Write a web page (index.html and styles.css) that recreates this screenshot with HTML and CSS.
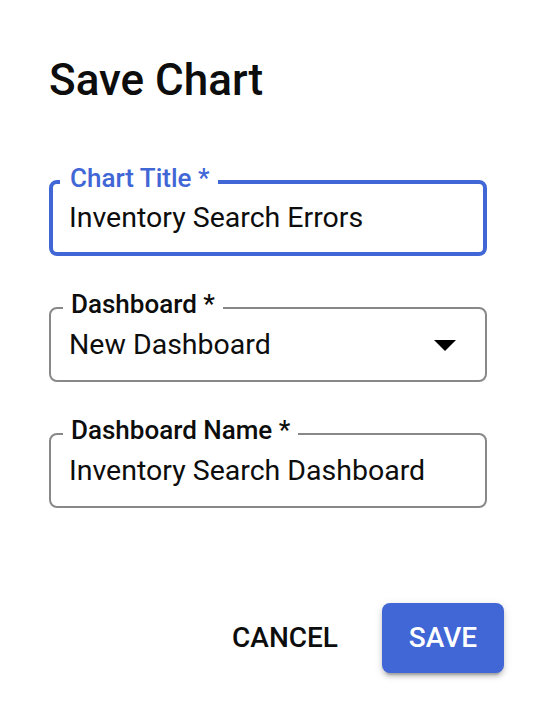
FILE: index.html
```html
<!DOCTYPE html>
<html lang="en">
<head>
<meta charset="utf-8">
<title>Save Chart</title>
<link rel="stylesheet" href="styles.css">
</head>
<body>
<div class="dialog">
  <h2 class="dialog-title">Save Chart</h2>
  <div class="dialog-content">
    <fieldset class="field focused">
      <legend class="field-label">Chart Title *</legend>
      <div class="field-value">Inventory Search Errors</div>
    </fieldset>
    <fieldset class="field select">
      <legend class="field-label">Dashboard *</legend>
      <div class="field-value">
        <span>New Dashboard</span>
        <svg class="arrow" width="22" height="11" viewBox="0 0 22 11"><path d="M0 0 L22 0 L11 11 Z" fill="#000"/></svg>
      </div>
    </fieldset>
    <fieldset class="field">
      <legend class="field-label">Dashboard Name *</legend>
      <div class="field-value">Inventory Search Dashboard</div>
    </fieldset>
  </div>
  <div class="dialog-actions">
    <button class="btn btn-text">CANCEL</button>
    <button class="btn btn-contained">SAVE</button>
  </div>
</div>
</body>
</html>
```
FILE: styles.css
```css
html, body {
  margin: 0;
  padding: 0;
  background: #fff;
}
body {
  font-family: Roboto, "Noto Sans", "Liberation Sans", sans-serif;
  color: #111;
  width: 534px;
  height: 710px;
  overflow: hidden;
}
.dialog {
  display: flex;
  flex-direction: column;
  padding-top: 58px;
}
.dialog-title {
  margin: 0;
  padding-left: 49px;
  font-size: 44px;
  line-height: 44px;
  font-weight: 500;
  color: #0d0d0d;
}
.dialog-content {
  display: flex;
  flex-direction: column;
  gap: 35px;
  padding: 63px 47px 0 49px;
}
.field {
  margin: 0;
  min-inline-size: 0;
  border: 2px solid #888;
  border-radius: 8px;
  padding: 6.4px 29px 20.6px 18px;
  box-sizing: border-box;
}
.field.focused {
  border: 4px solid #4166d5;
  padding: 5.4px 29px 19.6px 16px;
}
.field-label {
  font-size: 26px;
  line-height: 26px;
  font-weight: 500;
  color: #0d0d0d;
  margin-left: -6px;
  padding: 0 8px 8px 8px;
}
.field.focused .field-label {
  color: #4166d5;
  margin-left: -9px;
  padding: 0 9px 8px 10px;
}
.field-value {
  display: flex;
  align-items: center;
  font-size: 28.5px;
  line-height: 28px;
  font-weight: 400;
  color: #0d0d0d;
}
.arrow {
  margin-left: auto;
  display: block;
}
.dialog-actions {
  display: flex;
  justify-content: flex-end;
  align-items: center;
  gap: 22px;
  padding: 95px 30px 0 0;
}
.btn {
  font-family: Roboto, "Noto Sans", "Liberation Sans", sans-serif;
  font-size: 28px;
  font-weight: 500;
  height: 70px;
  line-height: 70px;
  border: none;
  border-radius: 8px;
  cursor: pointer;
  background: none;
}
.btn-text {
  padding: 0 22px;
  color: #0d0d0d;
}
.btn-contained {
  width: 122px;
  padding: 0;
  color: #fff;
  background: #4166d5;
  box-shadow: 0 6px 2px -4px rgba(0,0,0,.2), 0 4px 4px 0 rgba(0,0,0,.14), 0 2px 10px 0 rgba(0,0,0,.12);
}
```
